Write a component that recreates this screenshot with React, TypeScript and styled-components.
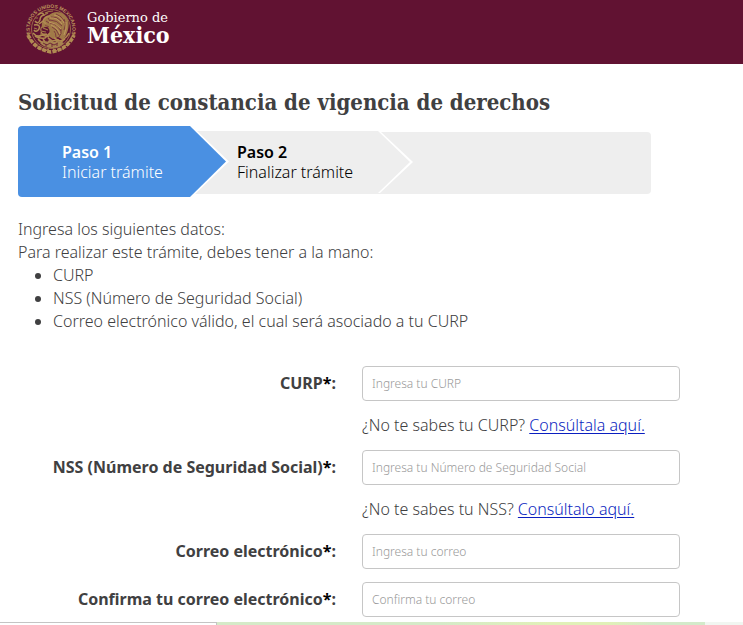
import React from 'react';
import styled, { createGlobalStyle, css } from 'styled-components';

const brandFont = '"DejaVu Serif Condensed", "DejaVu Serif", serif';

const GlobalStyle = createGlobalStyle`
  *, *::before, *::after { box-sizing: border-box; }
  body {
    margin: 0;
    background: #fff;
    color: #404041;
    font-family: "Noto Sans", "Open Sans", sans-serif;
    font-size: 16px;
    font-weight: 300;
    line-height: 23px;
  }
`;

const Page = styled.div`
  display: flex;
  flex-direction: column;
  min-height: 100vh;
`;

const Header = styled.header`
  background: #611232;
  padding: 2px 24px 8px;
`;

const Brand = styled.a`
  display: inline-flex;
  align-items: center;
  gap: 9px;
  color: #fff;
  text-decoration: none;
  vertical-align: top;
`;

const BrandText = styled.span`
  display: flex;
  flex-direction: column;
  padding-bottom: 4px;
  font-family: ${brandFont};
`;

const BrandSmall = styled.span`
  font-family: "DejaVu Serif", serif;
  font-size: 13px;
  line-height: 15px;
  font-weight: 400;
`;

const BrandLarge = styled.span`
  font-size: 23px;
  line-height: 19px;
  font-weight: 700;
`;

const Main = styled.main`
  padding: 24px 63px 0 18px;
`;

const Title = styled.h1`
  margin: 0 0 16px;
  font-family: ${brandFont};
  font-size: 22px;
  line-height: 28px;
  font-weight: 700;
  white-space: nowrap;
`;

const Steps = styled.ol`
  display: flex;
  list-style: none;
  margin: 0 29px 24px 0;
  padding: 0;
  height: 62px;
  background: #eee;
  border-radius: 4px;
  line-height: 20px;
`;

const arrow = (point: number) => css`
  clip-path: polygon(
    0 0,
    calc(100% - ${point}px) 0,
    100% 50%,
    calc(100% - ${point}px) 100%,
    0 100%
  );
`;

const Step = styled.li<{ $active?: boolean }>`
  position: relative;
  z-index: ${p => (p.$active ? 2 : 1)};
  display: flex;
  background: #fff;
  padding-right: 3px;
  margin: ${p => (p.$active ? '-6px -38px -3px 0' : '-1px 0 1px')};
  width: ${p => (p.$active ? 211 : 222)}px;
  ${p => arrow(p.$active ? 37 : 33)}
`;

const StepBody = styled.div<{ $active?: boolean }>`
  flex: 1;
  display: flex;
  flex-direction: column;
  justify-content: center;
  padding-left: ${p => (p.$active ? 44 : 46)}px;
  color: ${p => (p.$active ? '#fff' : '#000')};
  background: ${p => (p.$active ? '#4a90e2' : '#eee')};
  border-radius: 4px 0 0 4px;
  ${p => arrow(p.$active ? 36 : 32)}
`;

const StepName = styled.strong`
  font-weight: 600;
`;

const Intro = styled.p`
  margin: 0;
`;

const Requirements = styled.ul`
  margin: 0 0 33px;
  padding-left: 35px;
`;

const Form = styled.form`
  display: grid;
  grid-template-columns: 1fr 1fr;
  column-gap: 26px;
  row-gap: 13px;
  align-items: center;
`;

const Label = styled.label`
  justify-self: end;
  font-weight: 700;
  white-space: nowrap;
`;

const Required = styled.span`
  color: #000;
`;

const TextBox = styled.input`
  width: 100%;
  height: 35px;
  padding: 0 9px;
  border: 1px solid #c6c6c6;
  border-radius: 4px;
  background: #fff;
  color: #404041;
  font: inherit;
  font-size: 12px;
  &::placeholder { color: #999; opacity: 1; }
`;

const Hint = styled.p`
  grid-column: 2;
  margin: 0;
  white-space: nowrap;
`;

const HelpLink = styled.a`
  color: #0b1fc0;
  text-underline-offset: 2px;
`;

const BottomEdge = styled.footer`
  display: flex;
  height: 3px;
  margin-top: auto;
`;

const StatusEdge = styled.div`
  width: 217px;
  border: solid #c4c4c4;
  border-width: 1px 1px 0 0;
`;

const GreenStrip = styled.div`
  flex: 1;
  background: linear-gradient(90deg, #d5eac8 0 46%, #e1f0b8 68% 80%, #d3eaca 90%);
`;

const PaleStrip = styled.div`
  width: 38px;
  background: #f1f6f1;
`;

const Seal = () => (
  <svg width="54" height="54" viewBox="0 0 54 54" fill="none" stroke="#b08b52" aria-hidden="true">
    <defs>
      <path id="sealArc" d="M6.8 33.5A21.2 21.2 0 1 1 47.2 33.5" />
    </defs>
    <text fill="#bc955c" stroke="none" fontFamily="Liberation Sans, sans-serif" fontSize="5" fontWeight="700">
      <textPath href="#sealArc" startOffset="50%" textAnchor="middle">ESTADOS UNIDOS MEXICANOS</textPath>
    </text>
    <circle cx="27" cy="27" r="19.5" strokeWidth=".7" />
    <path d="M4 33Q10 47 27 50Q44 47 50 33" strokeWidth="3.6" strokeDasharray="4 1.2" />
    <path d="M3 31l4 5m-2 1l5 3m-1 3l5 1m0 3l5 0m2 2l4-2M51 31l-4 5m2 1l-5 3m1 3l-5 1m0 3l-5 0m-2 2l-4-2" strokeWidth="1.2" />
    {/* Wing and tail feathers */}
    <path fill="#a17a48" stroke="none" d="M24 14C31 7 41 10 44 18C46 25 43 33 39 38L34 35L29 37L23 33C27 31 26 26 22 24L18 26C17 20 20 15 24 14Z" />
    <path stroke="#742b3a" strokeWidth=".8" d="M27 15q6-1 10 4M26 18q7 0 12 6M26 21q7 1 11 8M28 25q5 2 7 8M32 12q6 2 8 7M40 17q3 5 0 11M37 27q1 5-2 8M30 29q2 2 2 6M22 19l3 2m-4 2l4 2m-1-9l2 3" />
    <path stroke="#c39b61" strokeWidth=".9" d="M26 16q7-1 12 6M25 20q7 1 12 7M27 23q7 3 9 9M30 13q7 1 10 8M42 20q1 7-2 13" />
    {/* Head, snake and branches */}
    <path stroke="#b08b52" strokeWidth="1.5" d="M26 14q-5 0-7 5l-4 3m4-3l3 3M14 13q4-4 6 0q-4 1-4 5q-2 5-5 1m-1 4q7-1 5 4q-3 4-5 1m-1 3q4 5 9 2l7 2" />
    <path stroke="#a17a48" strokeWidth="1.2" d="M20 24q-4 1-3 5l5 1m-3-4l5 2m-8 4l6 0M11 16l3 0m-4 10l3 1m7-14l4-2m-5 14l4-1M21 11q4-2 8-2" />
    <path stroke="#af884f" strokeWidth="1.6" d="M11 34q4 3 10 2l5-5m-3 1q-4 2-6-2m7 6l4 3 7-1m-5-2l6 3q6-2 9-8M14 37q4 5 9 3m-4-3l2 3m11-1l4 2 5-4" />
    <path fill="#a88350" stroke="none" d="M16 41q3-3 7-1l3-3 4 3q6-2 10 1q-4 5-11 5q-9 0-13-5Z" />
    <path stroke="#611232" strokeWidth=".8" d="M19 41l4 2 3-2 4 2 4-2m-12 4v-3m6 3v-3m5 2v-2" />
  </svg>
);

interface FieldProps {
  id: string;
  label: string;
  placeholder: string;
  type?: string;
}

const Field = ({ id, label, placeholder, type = 'text' }: FieldProps) => (
  <>
    <Label htmlFor={id}>{label}<Required>*</Required>:</Label>
    <TextBox id={id} name={id} type={type} placeholder={placeholder} required />
  </>
);

export default function App() {
  return (
    <Page>
      <GlobalStyle />
      <Header>
        <Brand href="#">
          <Seal />
          <BrandText>
            <BrandSmall>Gobierno de</BrandSmall>
            <BrandLarge>México</BrandLarge>
          </BrandText>
        </Brand>
      </Header>
      <Main>
        <Title>Solicitud de constancia de vigencia de derechos</Title>
        <Steps>
          <Step $active aria-current="step">
            <StepBody $active>
              <StepName>Paso 1</StepName>
              <span>Iniciar trámite</span>
            </StepBody>
          </Step>
          <Step>
            <StepBody>
              <StepName>Paso 2</StepName>
              <span>Finalizar trámite</span>
            </StepBody>
          </Step>
        </Steps>
        <Intro>Ingresa los siguientes datos:</Intro>
        <Intro>Para realizar este trámite, debes tener a la mano:</Intro>
        <Requirements>
          <li>CURP</li>
          <li>NSS (Número de Seguridad Social)</li>
          <li>Correo electrónico válido, el cual será asociado a tu CURP</li>
        </Requirements>
        <Form>
          <Field id="curp" label="CURP" placeholder="Ingresa tu CURP" />
          <Hint>¿No te sabes tu CURP? <HelpLink href="#curp">Consúltala aquí.</HelpLink></Hint>
          <Field id="nss" label="NSS (Número de Seguridad Social)" placeholder="Ingresa tu Número de Seguridad Social" />
          <Hint>¿No te sabes tu NSS? <HelpLink href="#nss">Consúltalo aquí.</HelpLink></Hint>
          <Field id="correo" label="Correo electrónico" placeholder="Ingresa tu correo" type="email" />
          <Field id="confirma" label="Confirma tu correo electrónico" placeholder="Confirma tu correo" type="email" />
        </Form>
      </Main>
      <BottomEdge>
        <StatusEdge />
        <GreenStrip />
        <PaleStrip />
      </BottomEdge>
    </Page>
  );
}
